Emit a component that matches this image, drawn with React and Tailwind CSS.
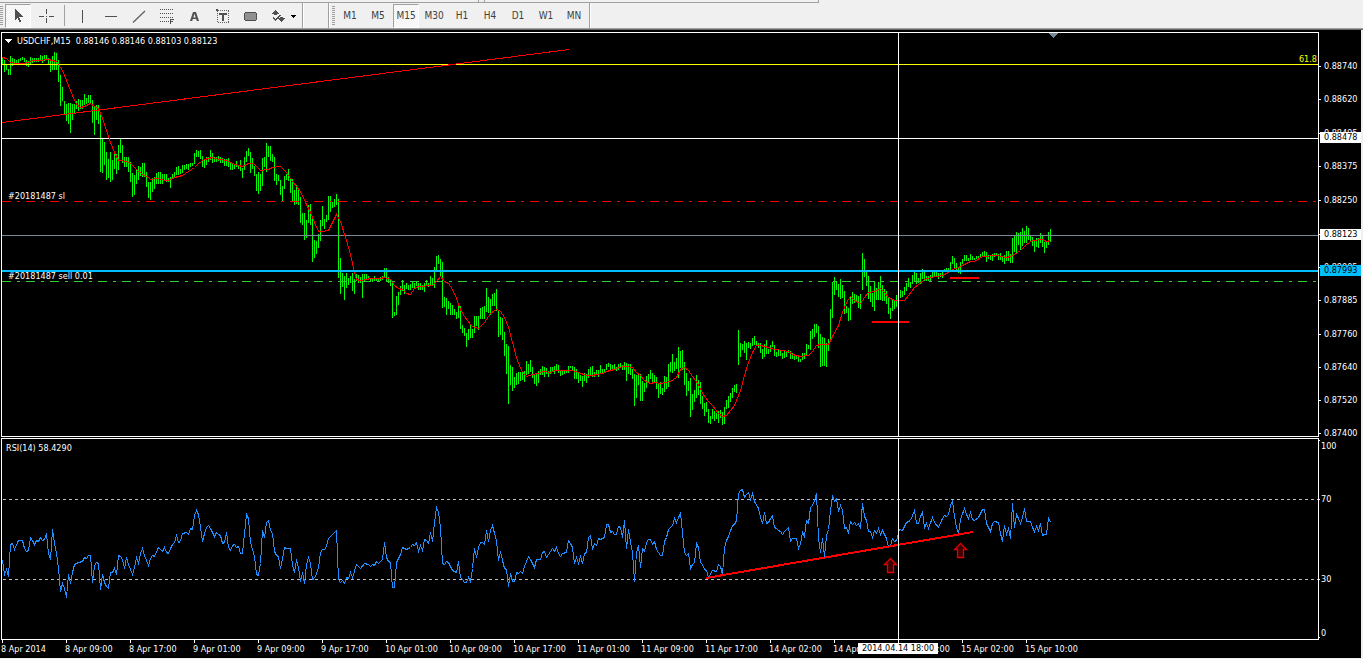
import React from "react";

const FONT = "font-['DejaVu_Sans_Condensed','DejaVu_Sans',sans-serif]";

// High and low of each bar, in chart coordinates; one bar every two pixels from x = 2.
const BARS = [
  57,64, 60,72, 64,70, 69,75, 56,75, 58,66, 59,65, 60,64, 59,63, 58,61, 57,60, 58,62, 60,66, 61,67, 57,65, 58,63, 58,62, 58,62, 58,62,
  55,61, 56,63, 55,61, 55,60, 58,65, 61,72, 56,70, 52,70, 53,70, 60,82, 75,106, 87,101, 101,115, 104,121, 103,124, 103,133, 104,120,
  104,114, 101,109, 99,111, 100,109, 100,109, 94,105, 98,104, 95,103, 95,104, 100,123, 107,135, 105,120, 105,124, 115,172, 139,173,
  142,165, 152,180, 159,178, 152,182, 160,180, 153,169, 154,174, 145,170, 138,153, 145,163, 157,167, 157,167, 157,172, 162,182, 173,197,
  175,195, 170,184, 166,180, 167,176, 163,177, 163,177, 172,187, 182,198, 182,200, 178,192, 177,189, 173,184, 172,184, 172,184, 174,184,
  174,181, 174,182, 178,182, 177,188, 174,179, 172,178, 167,175, 166,175, 169,174, 165,173, 165,170, 164,169, 164,170, 163,167, 163,166,
  153,164, 150,157, 151,157, 150,159, 156,167, 159,168, 157,165, 157,162, 150,160, 153,163, 157,162, 157,162, 156,161, 157,163, 158,163,
  159,166, 159,166, 158,167, 162,170, 163,170, 164,169, 161,167, 165,169, 160,171, 168,178, 157,170, 151,162, 148,156, 152,173, 158,169,
  166,176, 174,191, 172,194, 174,191, 158,186, 157,167, 143,172, 146,157, 146,161, 154,162, 157,181, 174,185, 175,181, 180,195, 186,201,
  176,189, 174,180, 169,181, 179,193, 179,201, 190,205, 185,204, 190,205, 197,223, 213,225, 213,240, 220,238, 205,223, 204,225, 218,262,
  240,258, 241,254, 234,248, 220,241, 206,226, 219,229, 215,222, 196,220, 196,212, 202,208, 199,207, 194,205, 199,278, 258,294, 273,287,
  276,300, 273,288, 278,285, 276,283, 273,291, 279,294, 274,281, 275,283, 277,283, 274,298, 274,281, 274,279, 276,280, 278,282, 279,282,
  276,281, 278,281, 278,282, 277,281, 276,280, 268,278, 268,282, 277,283, 279,286, 283,318, 312,316, 296,315, 292,305, 286,295, 280,291,
  285,294, 283,289, 285,290, 284,290, 282,288, 283,288, 282,286, 283,290, 283,290, 285,290, 283,292, 280,286, 283,287, 276,285, 278,286,
  267,288, 256,272, 255,264, 259,276, 262,308, 297,307, 298,315, 301,309, 303,315, 305,315, 309,315, 312,319, 306,318, 306,329, 325,333,
  328,336, 333,347, 329,340, 325,338, 329,338, 316,333, 316,326, 316,330, 308,319, 307,319, 306,319, 288,312, 297,313, 299,315, 294,306,
  293,306, 289,311, 311,337, 317,335, 318,340, 332,356, 344,374, 346,404, 365,385, 367,391, 377,388, 373,385, 372,384, 372,381, 372,380,
  371,382, 361,375, 364,374, 360,372, 367,378, 374,384, 373,386, 371,383, 369,375, 366,375, 367,377, 368,374, 371,377, 367,374, 367,372,
  366,374, 364,371, 365,373, 370,376, 370,375, 370,374, 370,373, 366,373, 366,368, 366,371, 367,379, 369,379, 372,383, 375,381, 376,387,
  373,381, 374,383, 369,378, 367,376, 366,377, 372,377, 370,375, 370,377, 365,374, 369,374, 369,372, 364,370, 363,367, 364,370, 365,369,
  364,369, 367,371, 364,370, 363,368, 365,370, 362,370, 363,381, 364,374, 364,375, 369,379, 374,406, 375,398, 374,385, 374,401, 381,401,
  383,392, 376,388, 374,382, 370,379, 373,382, 375,382, 377,389, 383,398, 382,394, 388,395, 376,392, 377,389, 364,387, 362,372, 354,373,
  362,371, 358,369, 347,378, 351,368, 350,370, 362,385, 373,396, 381,391, 378,417, 394,410, 390,402, 375,398, 380,395, 382,404, 396,409,
  403,416, 402,412, 409,423, 416,424, 409,419, 411,421, 413,419, 411,423, 410,418, 412,425, 407,424, 400,409, 396,408, 393,402, 388,398,
  385,392, 384,393, 330,365, 343,357, 344,350, 341,353, 343,360, 342,348, 343,349, 338,346, 336,345, 341,346, 343,348, 343,353, 349,359,
  344,357, 340,354, 349,354, 345,352, 341,347, 345,356, 352,357, 350,356, 351,356, 353,359, 350,358, 352,357, 350,353, 351,359, 353,359,
  356,360, 355,359, 355,362, 359,362, 353,360, 353,359, 344,356, 345,349, 331,350, 329,339, 324,337, 324,333, 326,348, 334,367, 337,366,
  338,366, 343,367, 339,351, 309,340, 282,318, 277,295, 281,290, 284,297, 279,299, 285,298, 291,314, 306,313, 308,321, 296,320, 292,304,
  294,303, 295,301, 296,308, 294,309, 253,290, 259,277, 270,286, 276,299, 286,302, 293,307, 281,311, 288,300, 282,300, 276,300, 285,301,
  289,301, 291,304, 298,314, 308,319, 299,311, 300,309, 295,307, 292,301, 290,298, 291,297, 287,295, 283,291, 278,287, 282,288, 275,284,
  272,282, 273,284, 278,283, 273,284, 269,279, 270,281, 276,281, 276,281, 275,281, 272,278, 271,276, 271,277, 273,279, 273,277, 271,278,
  269,272, 268,271, 268,271, 262,270, 256,264, 258,269, 263,271, 268,273, 262,274, 259,264, 255,261, 255,261, 258,261, 254,260, 256,260,
  258,260, 256,259, 256,258, 254,258, 252,257, 251,257, 252,262, 255,259, 256,260, 254,261, 253,257, 253,256, 254,260, 253,260, 256,262,
  255,264, 251,261, 251,261, 254,263, 238,263, 235,252, 232,253, 233,245, 232,250, 228,246, 231,243, 226,243, 228,240, 235,242, 237,246,
  240,252, 238,247, 238,248, 233,243, 236,247, 242,253, 242,248, 232,245, 229,242,
];

const AVERAGE =
  "2,57 6,58 10,62 16,63 22,63 28,62 32,60 40,60 48,59 56,61 62,70 68,85 72,95 76,104 80,107 84,106 90,103 94,106 98,108 102,118 106,130 110,142 114,152 118,160 126,161 130,163 136,169 142,174 148,177 150,179 158,178 164,180 168,180 174,177 182,175 188,171 194,167 198,163 204,159 212,157 218,159 226,160 232,163 238,165 242,166 248,163 253,163 260,170 268,169 272,167 280,166 286,172 292,181 300,191 306,204 310,212 314,222 318,231 322,231 328,230 332,222 336,214 340,221 346,240 350,254 354,272 356,279 360,280 366,279 370,278 380,278 384,277 390,279 394,285 398,288 402,289 406,293 410,294 414,288 418,286 432,285 436,281 440,276 444,281 448,283 452,289 456,298 460,309 464,316 470,324 472,326 478,328 484,322 490,313 494,310 497,309 500,311 504,317 508,327 512,342 516,357 520,368 524,374 526,376 532,374 538,373 542,371 550,372 554,370 572,370 578,372 586,375 592,375 596,374 602,373 606,371 614,369 618,367 624,366 632,367 636,372 640,375 644,380 650,383 654,382 660,383 670,381 676,377 680,369 684,367 688,370 692,376 698,384 702,393 708,401 712,405 718,413 722,416 726,415 730,410 734,405 736,400 740,390 744,375 748,362 752,352 756,345 760,345 768,347 774,349 782,350 788,351 792,354 796,355 800,356 808,355 812,351 816,345 820,344 828,344 832,336 838,325 842,312 846,302 850,296 854,300 860,303 864,297 868,292 874,291 880,288 884,292 888,297 894,300 904,300 908,295 914,287 918,284 924,279 930,277 936,276 942,275 948,272 952,269 958,267 964,264 970,261 974,261 982,256 996,255 1006,257 1010,256 1014,254 1020,250 1026,244 1032,240 1042,239 1046,241 1050,240";

const RSI =
  "2,560 4,574 6,569 8,576 10,544 12,543 14,549 18,540 22,540 24,548 26,551 28,550 30,537 32,540 34,544 36,540 38,541 40,537 42,540 44,539 46,533 48,553 50,559 52,529 54,543 56,553 58,568 60,591 62,583 64,588 66,597 68,574 70,583 72,572 74,564 78,562 82,561 84,557 86,558 88,555 90,555 92,582 94,565 96,562 98,563 100,589 102,574 104,582 106,586 108,588 110,572 112,572 114,568 116,574 118,555 120,556 122,559 124,568 126,557 128,564 132,574 134,567 136,557 138,563 140,553 142,548 144,555 148,565 150,558 152,555 154,556 158,547 162,551 164,547 166,552 168,553 170,548 172,544 174,542 176,535 178,542 180,541 182,533 186,532 188,534 190,528 192,529 194,515 196,510 198,514 200,527 202,541 204,533 206,527 208,525 210,528 214,536 216,532 218,534 220,535 222,543 224,542 226,532 228,547 230,550 232,545 234,544 236,547 238,546 240,553 242,553 244,533 246,514 248,518 250,542 252,549 254,556 256,574 258,575 260,563 262,530 264,537 266,522 268,520 270,530 272,533 274,551 276,555 278,556 280,568 282,558 284,547 286,548 290,548 292,565 294,572 296,559 298,567 300,581 302,572 304,583 306,564 308,557 310,563 312,579 314,578 316,573 318,567 320,552 322,549 324,549 326,546 328,538 330,536 334,532 336,530 338,579 340,582 342,580 344,583 346,577 348,578 350,572 352,577 356,564 360,568 364,563 368,564 370,566 372,564 374,565 376,561 378,563 382,559 384,542 386,557 388,561 390,562 392,587 394,587 396,562 400,554 402,547 406,549 410,547 412,544 414,545 416,542 418,551 420,545 422,550 424,539 426,540 428,543 430,532 432,541 434,522 436,507 438,512 440,527 442,563 444,564 446,561 448,562 450,566 452,570 454,571 456,572 458,561 460,577 462,579 464,582 466,582 468,577 470,581 472,568 474,548 476,557 478,547 480,542 482,542 484,544 486,530 488,541 490,530 492,525 494,533 496,540 498,560 500,551 502,560 504,568 506,569 508,586 510,573 512,581 514,581 516,572 518,573 520,571 522,573 524,566 528,556 530,559 532,563 534,567 536,559 538,559 540,559 542,552 544,551 546,557 548,554 550,551 552,548 554,551 556,547 558,553 560,556 562,553 566,552 568,540 570,543 572,547 574,563 576,557 578,563 580,556 582,563 584,553 586,552 588,537 590,535 592,549 594,543 596,545 598,538 600,539 602,538 604,537 606,524 608,524 610,532 612,531 614,534 616,534 618,526 620,527 622,537 624,520 626,548 628,529 630,542 632,552 634,581 636,552 638,545 640,567 642,548 644,551 646,542 648,539 650,539 652,544 654,541 656,549 660,555 662,555 664,541 666,537 668,529 672,525 674,518 676,522 678,517 680,513 682,532 684,552 686,555 688,553 690,568 692,564 694,562 696,543 698,547 700,562 702,564 704,569 706,570 708,577 712,570 716,571 718,564 720,566 722,574 724,547 726,540 728,536 732,525 734,524 736,520 738,493 740,490 742,489 744,497 746,494 748,492 750,499 752,493 754,501 758,508 760,517 762,523 764,512 766,523 768,522 770,518 772,515 774,527 776,528 778,530 780,531 782,534 784,531 788,527 790,541 792,538 796,538 798,548 800,543 802,532 804,536 806,520 808,523 810,507 812,505 814,500 816,493 818,538 820,552 822,538 824,556 826,535 828,529 830,510 832,495 834,501 836,498 838,511 840,505 842,510 844,528 846,527 848,533 850,521 852,524 854,522 856,525 858,523 860,528 862,503 864,516 866,520 868,531 870,531 872,537 874,530 876,533 878,528 880,534 882,530 886,538 888,547 890,545 892,538 894,541 896,540 899,529 902,530 906,522 910,520 914,510 916,523 918,523 920,516 922,512 924,527 926,523 928,528 932,517 934,522 938,527 942,518 944,515 946,516 948,514 950,505 952,500 954,516 956,527 958,533 960,519 964,508 966,514 968,518 970,512 972,519 974,520 978,517 982,509 984,509 986,523 990,531 992,523 994,521 998,522 1000,533 1002,541 1004,525 1006,534 1008,528 1010,538 1012,503 1014,527 1016,514 1018,518 1020,523 1022,517 1024,508 1026,521 1030,521 1032,527 1034,531 1036,526 1038,530 1040,523 1042,535 1044,534 1046,534 1048,517 1050,522";

const barPath = Array.from({ length: BARS.length / 2 }, (_, i) => {
  const x = 2 + i * 2;
  const hi = BARS[i * 2];
  const lo = BARS[i * 2 + 1];
  return `M${x} ${hi}h1V${lo}h-1z`;
}).join("");

const PRICES = [0.8874, 0.8862, 0.88495, 0.88375, 0.8825, 0.88125, 0.88005, 0.87885, 0.8776, 0.8764, 0.8752, 0.874];
// Distance of a price from the top of the price panel.
const priceTop = (p) => Math.round(34 + (0.8874 - p) * 27390);

const MARKS = [
  { price: "0.88478", top: 100, tone: "bg-white text-black" },
  { price: "0.88123", top: 197, tone: "bg-white text-black" },
  { price: "0.87993", top: 233, tone: "bg-[#00bfff] text-black" },
];

const RSI_LEVELS = [
  { value: "100", top: 8, tick: 2 },
  { value: "70", top: 61, tick: 61 },
  { value: "30", top: 141, tick: 141 },
  { value: "0", top: 195, tick: 199 },
];

const TIMES = [
  "8 Apr 2014", "8 Apr 09:00", "8 Apr 17:00", "9 Apr 01:00", "9 Apr 09:00", "9 Apr 17:00",
  "10 Apr 01:00", "10 Apr 09:00", "10 Apr 17:00", "11 Apr 01:00", "11 Apr 09:00", "11 Apr 17:00",
  "14 Apr 02:00", "14 Apr 10:00", "14 Apr 18:00", "15 Apr 02:00", "15 Apr 10:00",
];

const FRAMES = ["M1", "M5", "M15", "M30", "H1", "H4", "D1", "W1", "MN"];

const CHECKER = "bg-[repeating-conic-gradient(#ffffff_0_25%,#efefef_0_50%)] bg-[length:2px_2px]";
const PRESSED = `border border-t-[#a0a0a0] border-l-[#a0a0a0] border-r-white border-b-white ${CHECKER}`;

function Icon({ children, w = 16, crisp = true }) {
  return (
    <svg width={w} height="16" viewBox={`0 0 ${w} 16`} fill="#505050" shapeRendering={crisp ? "crispEdges" : "auto"} aria-hidden="true">
      {children}
    </svg>
  );
}

function ToolButton({ label, pressed, wide, children }) {
  return (
    <button
      type="button"
      aria-label={label}
      aria-pressed={pressed}
      className={`flex h-6 shrink-0 items-center justify-center ${wide ? "w-9" : "w-[26px]"} ${pressed ? PRESSED : ""}`}
    >
      {children}
    </button>
  );
}

function Grip() {
  return (
    <div className="h-[19px] w-[3px] shrink-0 bg-[repeating-linear-gradient(#a0a0a0_0_1px,#f0f0f0_1px_2px)]" />
  );
}

function Divider() {
  return <div className="h-full w-[2px] shrink-0 border-l border-[#a0a0a0] bg-white" />;
}

function Toolbar() {
  return (
    <header className="flex flex-col bg-[#f0f0f0]">
      <div className="flex h-[3px]">
        <div className="w-[479px] border-r border-b border-[#a0a0a0]" />
        <div className="w-[5px] border-b border-[#a0a0a0]" />
        <div className="w-[335px] border-x border-b border-[#a0a0a0]" />
      </div>
      <div className="flex h-[25px] items-center">
        <Grip />
        <div className="flex items-center gap-[2px] pr-px pl-[2px]">
          <ToolButton label="Cursor" pressed>
            <Icon>
              <path d="M5 1h1v1h1v1h1v1h1v1h1v1h1v1h1v1h1v1h-4v1h1v2h1v2h-2v-2h-1v-2h-1v1h-1v1h-1z" />
            </Icon>
          </ToolButton>
          <ToolButton label="Crosshair">
            <Icon>
              <path d="M8 1h1v5h-1zM8 10h1v5h-1zM1 8h5v1h-5zM11 8h5v1h-5zM8 8h1v1h-1z" />
            </Icon>
          </ToolButton>
          <div className="mr-[2px] ml-[3px] h-[21px] w-px bg-[#a0a0a0]" />
          <ToolButton label="Vertical line">
            <Icon>
              <path d="M8 2h1v13h-1z" />
            </Icon>
          </ToolButton>
          <ToolButton label="Horizontal line">
            <Icon>
              <path d="M3 8h12v1h-12z" />
            </Icon>
          </ToolButton>
          <ToolButton label="Trendline">
            <Icon crisp={false}>
              <path d="M3 14.5L15 3" stroke="#606060" strokeWidth="1.3" />
            </Icon>
          </ToolButton>
          <ToolButton label="Fibonacci retracement">
            <Icon>
              <path d="M2 1.500h14M2 5.500h14M2 9.500h14M2 13.500h9" stroke="#505050" strokeDasharray="1 1" />
              <path d="M12 11h4v1h-3v1h2v1h-2v2h-1z" />
            </Icon>
          </ToolButton>
          <ToolButton label="Text">
            <Icon crisp={false}>
              <path fillRule="evenodd" d="M7 4h3l3 9h-2.200l-.6-2H6.800l-.6 2H4zM8.500 5.800L7.300 9.500h2.400z" />
            </Icon>
          </ToolButton>
          <ToolButton label="Text label">
            <Icon>
              <path d="M4 2.500h11M4 14.500h11M3.500 3v12M14.500 3v12" stroke="#606060" strokeDasharray="1 1" fill="none" />
              <path d="M2 1h2v2h-2zM5 5h8v2h-3v6h-2v-6h-3z" />
            </Icon>
          </ToolButton>
          <ToolButton label="Shapes">
            <Icon>
              <path d="M3 4h11v1h1v7h-1v1h-11v-1h-1v-7h1z" />
              <path d="M3 5h11v7h-11z" fill="#909090" />
            </Icon>
          </ToolButton>
          <ToolButton label="Arrows" wide>
            <Icon w={26}>
              <path d="M5 2h1v1h1v1h1v1h1v1h-2v1h-3v-1h-2v-1h1v-1h1v-1h1zM8 10h2v-1h3v1h2v1h-1v1h-1v1h-1v1h-1v-1h-1v-1h-1v-1h-1z" />
              <path d="M3 9h1v1h1v1h1v-1h1v-1h1v-1h1v-1h2v1h-1v1h-1v1h-1v1h-1v1h-1v1h-1v-1h-1v-1h-1z" />
              <path d="M21 7h5v1h-1v1h-1v1h-1v-1h-1v-1h-1z" fill="#000" />
            </Icon>
          </ToolButton>
        </div>
        <Divider />
        <div className="w-6" />
        <Divider />
        <div className="w-[2px]" />
        <Grip />
        <div className="flex items-center gap-[2px] pr-[2px] pl-[2px]">
          {FRAMES.map((f) => (
            <button
              key={f}
              type="button"
              aria-pressed={f === "M15"}
              className={`flex h-6 w-[26px] shrink-0 items-center justify-center pt-px text-[10px] leading-3 text-[#404040] ${f === "M15" ? PRESSED : ""}`}
            >
              {f}
            </button>
          ))}
        </div>
        <Divider />
      </div>
      <div className="h-[2px] border-t border-[#a0a0a0] bg-[#696969]" />
    </header>
  );
}

function PricePanel() {
  return (
    <section aria-label="USDCHF price chart" className="relative h-[405px] border border-white">
      <svg className="block h-full w-full" shapeRendering="crispEdges" fill="none" aria-hidden="true">
        <path d={barPath} transform="translate(-2 -33)" fill="#00ff00" />
        <line x1="0" x2="100%" y1="31.500" y2="31.500" stroke="#ffff00" />
        <line x1="0" x2="100%" y1="105.500" y2="105.500" stroke="#ffffff" />
        <line x1="0" x2="100%" y1="168.500" y2="168.500" stroke="#ff0000" strokeDasharray="9 6 3 6" />
        <line x1="0" x2="100%" y1="202.500" y2="202.500" stroke="#778899" />
        <line x1="0" x2="100%" y1="248.500" y2="248.500" stroke="#32cd32" strokeDasharray="9 6 3 6" />
        <g transform="translate(-2 -33)">
          <polyline points={AVERAGE} transform="translate(0.5 0.5)" stroke="#ff0000" />
          <path d="M2 122.500L569 49.500" stroke="#ff0000" />
          <path d="M872 322h37M950 278h29" stroke="#ff0000" strokeWidth="2" />
          <path d="M1048 33h10l-5 5z" fill="#778899" />
        </g>
        <line x1="0" x2="100%" y1="238" y2="238" stroke="#00bfff" strokeWidth="2" />
        <line x1="896.500" x2="896.500" y1="0" y2="100%" stroke="#ffffff" />
      </svg>
      <h1 className="absolute top-[2px] left-[3px] flex items-center gap-[5px] whitespace-pre">
        <svg width="7" height="4" viewBox="0 0 7 4" fill="#fff" shapeRendering="crispEdges" aria-hidden="true">
          <path d="M0 0h7v1h-1v1h-1v1h-1v1h-1v-1h-1v-1h-1v-1h-1z" />
        </svg>
        USDCHF,M15{"  "}0.88146 0.88146 0.88103 0.88123
      </h1>
      <span className="absolute top-5 right-px text-[#ffff00]">61.8</span>
      <span className="absolute top-[157px] left-[6px]">#20181487 sl</span>
      <span className="absolute top-[237px] left-[6px]">#20181487 sell 0.01</span>
    </section>
  );
}

function PriceAxis() {
  return (
    <div className="relative">
      {PRICES.map((p) => (
        <div key={p} className="absolute left-0 flex h-3 -translate-y-1/2 items-center gap-[3px]" style={{ top: priceTop(p) }}>
          <span className="h-px w-[2px] bg-white" />
          {p.toFixed(5)}
        </div>
      ))}
      {MARKS.map((m) => (
        <div key={m.price} className={`absolute right-0 left-px h-[11px] pl-[4px] leading-[11px] ${m.tone}`} style={{ top: m.top }}>
          {m.price}
        </div>
      ))}
    </div>
  );
}

function UpArrow({ x, y }) {
  return (
    <path
      d="M6.500 0.500L12.500 6.500H9.500V14.500H3.500V6.500H0.500Z"
      transform={`translate(${x} ${y})`}
      fill="#400000"
      stroke="#e00000"
      strokeWidth="1.3"
      shapeRendering="auto"
    />
  );
}

function RsiPanel() {
  return (
    <section aria-label="RSI indicator" className="relative h-[202px] border border-white">
      <svg className="block h-full w-full" shapeRendering="crispEdges" fill="none" aria-hidden="true">
        <line x1="1" x2="100%" y1="60.500" y2="60.500" stroke="#c0c0c0" strokeDasharray="3 3" />
        <line x1="1" x2="100%" y1="140.500" y2="140.500" stroke="#c0c0c0" strokeDasharray="3 3" />
        <g transform="translate(-2 -439)">
          <polyline points={RSI} transform="translate(0.5 0.5)" stroke="#1e90ff" />
          <path d="M706 578L973 532" stroke="#ff0000" strokeWidth="2" />
          <UpArrow x={884} y={558} />
          <UpArrow x={954} y={543} />
        </g>
        <line x1="896.500" x2="896.500" y1="0" y2="100%" stroke="#ffffff" />
      </svg>
      <h2 className="absolute top-[3px] left-1">RSI(14) 58.4290</h2>
    </section>
  );
}

function RsiAxis() {
  return (
    <div className="relative">
      {RSI_LEVELS.map((l) => (
        <React.Fragment key={l.value}>
          <span className="absolute left-0 h-px w-px bg-white" style={{ top: l.tick }} />
          <span className="absolute left-[2px] h-3 -translate-y-1/2" style={{ top: l.top }}>
            {l.value}
          </span>
        </React.Fragment>
      ))}
    </div>
  );
}

function TimeAxis() {
  return (
    <div className="relative flex h-[18px] overflow-hidden">
      {TIMES.map((t) => (
        <div key={t} className="w-16 shrink-0 whitespace-nowrap">
          <div className="ml-px h-[3px] w-px bg-white" />
          <div>{t}</div>
        </div>
      ))}
      <div className="absolute top-[3px] left-[857px] h-[11px] w-20 bg-white text-center leading-[11px] text-black">
        2014.04.14 18:00
      </div>
    </div>
  );
}

export default function App() {
  return (
    <div className={`flex min-h-screen flex-col bg-[#f0f0f0] text-[9px] leading-3 text-white ${FONT}`}>
      <Toolbar />
      <main className="mr-[2px] grid grid-cols-[minmax(0,1fr)_42px] gap-y-px bg-black pt-[2px] pl-px">
        <PricePanel />
        <PriceAxis />
        <RsiPanel />
        <RsiAxis />
        <div className="col-span-2 -mt-px">
          <TimeAxis />
        </div>
      </main>
    </div>
  );
}
